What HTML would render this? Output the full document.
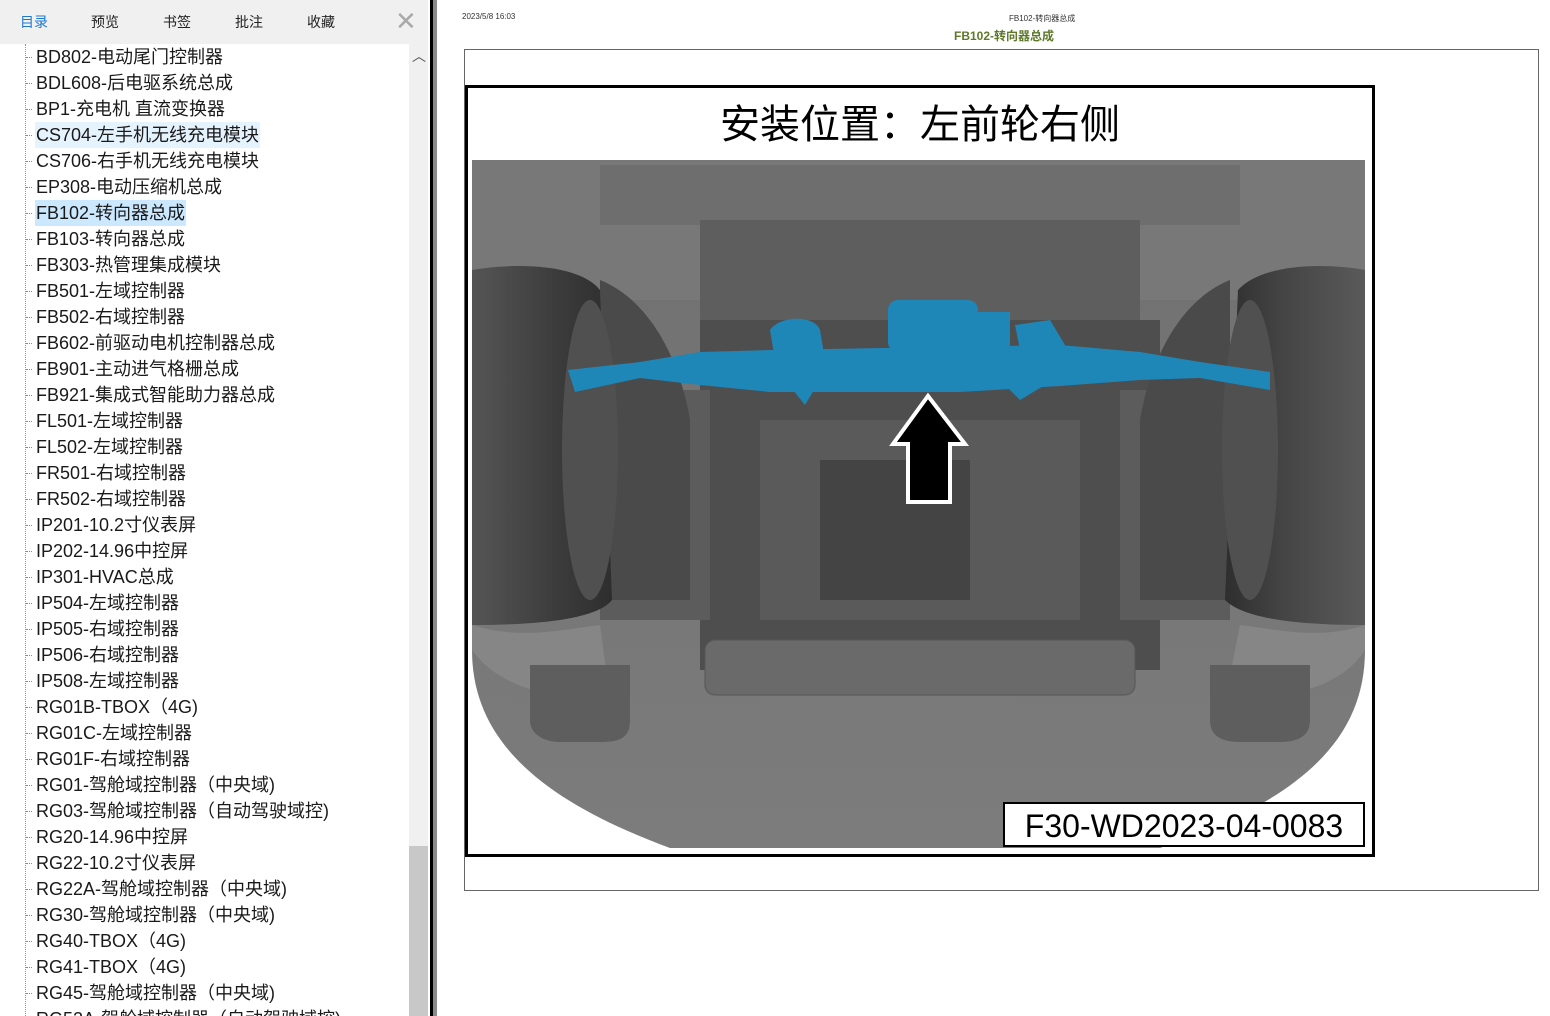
<!DOCTYPE html>
<html><head><meta charset="utf-8"><style>
*{margin:0;padding:0;box-sizing:border-box}
body{width:1550px;height:1016px;overflow:hidden;background:#fff;font-family:"Liberation Sans","Noto Sans CJK SC",sans-serif;position:relative}
#side{position:absolute;left:0;top:0;width:430px;height:1016px;background:#fff}
#tabs{position:absolute;left:0;top:0;width:428px;height:44px;background:#f0f0f0}
#tabs span{position:absolute;top:12px;font-size:14px;color:#222}
#list{position:absolute;left:0;top:44px;width:409px;height:972px;overflow:hidden}
.it{position:absolute;left:35px;font-size:18px;color:#1a1a1a;height:26px;line-height:26px;white-space:nowrap;padding:0 1px}
.dash{position:absolute;left:26px;width:6px;border-top:1px dotted #888}
#vline{position:absolute;left:25px;top:44px;height:972px;border-left:1px dotted #999}
#sb{position:absolute;left:409px;top:44px;width:19px;height:972px;background:#f0f0f0}
#thumb{position:absolute;left:409px;top:846px;width:19px;height:170px;background:#c8c8c8}
</style></head><body>
<div id="side">
<div id="tabs">
<span style="left:20px;color:#1e78d2">目录</span>
<span style="left:91px">预览</span>
<span style="left:163px">书签</span>
<span style="left:235px">批注</span>
<span style="left:307px">收藏</span>
<span style="left:395px;top:6px;font-size:26px;color:#aaa;font-weight:300">✕</span>
</div>
<div id="vline"></div>
<div id="list"></div>
<div id="sb"></div>
<div id="thumb"></div>
<div style="position:absolute;left:412px;top:46px;font-size:14px;color:#555">︿</div>
</div>
<div style="position:absolute;left:430px;top:0;width:3px;height:1016px;background:#000"></div>
<div style="position:absolute;left:433px;top:0;width:4px;height:1016px;background:#8a8a8a"></div>

<div style="position:absolute;left:462px;top:12px;font-size:8px;color:#333">2023/5/8 16:03</div>
<div style="position:absolute;left:1009px;top:13px;font-size:8px;color:#333">FB102-转向器总成</div>
<div style="position:absolute;left:954px;top:27px;font-size:12px;font-weight:bold;color:#5c7a2a">FB102-转向器总成</div>
<div style="position:absolute;left:464px;top:49px;width:1075px;height:842px;border:1px solid #666"></div>
<div style="position:absolute;left:465px;top:85px;width:910px;height:772px;border:3px solid #000"></div>
<div style="position:absolute;left:465px;top:100px;width:910px;text-align:center;font-size:40px;color:#000;line-height:50px">安装位置：左前轮右侧</div>

<svg style="position:absolute;left:0;top:0" width="1550" height="1016">
<defs>
<linearGradient id="tl" x1="0" x2="1"><stop offset="0" stop-color="#555"/><stop offset=".6" stop-color="#3c3c3c"/><stop offset="1" stop-color="#2e2e2e"/></linearGradient>
<linearGradient id="tr" x1="0" x2="1"><stop offset="0" stop-color="#2e2e2e"/><stop offset=".4" stop-color="#444"/><stop offset="1" stop-color="#5a5a5a"/></linearGradient>
<linearGradient id="ut" x1="0" y1="0" x2="0" y2="1"><stop offset="0" stop-color="#707070"/><stop offset="1" stop-color="#7c7c7c"/></linearGradient>
</defs>
<path d="M472,160H1365V650C1365,740 1300,800 1160,848H670C540,800 472,740 472,650Z" fill="url(#ut)"/>
<rect x="472" y="160" width="893" height="140" fill="#787878"/>
<rect x="600" y="165" width="640" height="60" fill="#6e6e6e"/>
<rect x="700" y="220" width="440" height="100" fill="#5e5e5e"/>
<rect x="700" y="320" width="460" height="350" fill="#4e4e4e"/>
<rect x="760" y="420" width="320" height="200" fill="#5a5a5a"/>
<rect x="820" y="460" width="150" height="140" fill="#444"/>
<rect x="600" y="390" width="110" height="230" fill="#5c5c5c"/>
<rect x="1120" y="390" width="110" height="230" fill="#5c5c5c"/>
<path d="M600,280C650,300 680,360 690,420L690,600 600,600Z" fill="#4a4a4a"/>
<path d="M1230,280C1180,300 1150,360 1140,420L1140,600 1230,600Z" fill="#4a4a4a"/>
<rect x="705" y="640" width="430" height="55" rx="10" fill="#6a6a6a" stroke="#555"/>
<path d="M472,270C520,262 580,265 600,290L612,600C600,615 560,625 472,625Z" fill="url(#tl)"/>
<path d="M1365,270C1320,262 1260,265 1238,290L1225,600C1240,615 1280,625 1365,625Z" fill="url(#tr)"/>
<ellipse cx="590" cy="450" rx="28" ry="150" fill="#505050"/>
<ellipse cx="1250" cy="450" rx="28" ry="150" fill="#505050"/>
<path d="M472,625C520,640 560,630 600,625L610,700C560,700 500,690 472,650Z" fill="#868686"/>
<path d="M1365,625C1320,640 1280,630 1240,625L1225,700C1280,700 1340,690 1365,650Z" fill="#868686"/>
<path d="M530,665H630V720C630,738 620,742 600,742H560C545,742 530,735 530,720Z" fill="#5e5e5e"/>
<path d="M1210,665H1310V720C1310,738 1295,742 1280,742H1240C1220,742 1210,735 1210,720Z" fill="#5e5e5e"/>
<g fill="#1f86b8">
<path d="M568,370L640,362 700,352 770,350 1060,345 1140,352 1200,362 1270,372 1270,390 1200,378 1140,380 1060,386 960,392 770,392 700,385 640,378 575,392Z"/>
<rect x="888" y="300" width="90" height="52" rx="10"/>
<rect x="965" y="312" width="45" height="38"/>
<path d="M770,330C780,315 815,315 820,330L825,360 800,372 775,360Z"/>
<path d="M1015,325L1050,320 1065,345 1050,372 1025,375Z"/>
<path d="M785,380L805,405 820,380Z"/>
<path d="M1000,380L1020,400 1045,385Z"/>
</g>
<path d="M928,396L965,444H950V502H908V444H893Z" fill="#000" stroke="#fff" stroke-width="4" stroke-linejoin="miter"/>
<rect x="1004" y="803" width="360" height="43" fill="#fff" stroke="#000" stroke-width="2"/>
<text x="1184" y="837" text-anchor="middle" font-family="Liberation Sans,sans-serif" font-size="32" fill="#000">F30-WD2023-04-0083</text>
</svg>

<script>
var items=["BD802-电动尾门控制器","BDL608-后电驱系统总成","BP1-充电机 直流变换器","CS704-左手机无线充电模块","CS706-右手机无线充电模块","EP308-电动压缩机总成","FB102-转向器总成","FB103-转向器总成","FB303-热管理集成模块","FB501-左域控制器","FB502-右域控制器","FB602-前驱动电机控制器总成","FB901-主动进气格栅总成","FB921-集成式智能助力器总成","FL501-左域控制器","FL502-左域控制器","FR501-右域控制器","FR502-右域控制器","IP201-10.2寸仪表屏","IP202-14.96中控屏","IP301-HVAC总成","IP504-左域控制器","IP505-右域控制器","IP506-右域控制器","IP508-左域控制器","RG01B-TBOX（4G)","RG01C-左域控制器","RG01F-右域控制器","RG01-驾舱域控制器（中央域)","RG03-驾舱域控制器（自动驾驶域控)","RG20-14.96中控屏","RG22-10.2寸仪表屏","RG22A-驾舱域控制器（中央域)","RG30-驾舱域控制器（中央域)","RG40-TBOX（4G)","RG41-TBOX（4G)","RG45-驾舱域控制器（中央域)","RG52A-驾舱域控制器（自动驾驶域控)"];
var h="";items.forEach(function(t,i){var y=i*26;var bg=i==6?"background:#cce8ff;":i==3?"background:#e5f3ff;":"";
h+='<div class="dash" style="top:'+(y+13)+'px"></div><div class="it" style="top:'+y+'px;'+bg+'">'+t+'</div>';});
document.getElementById("list").innerHTML=h;
</script>
</body></html>
